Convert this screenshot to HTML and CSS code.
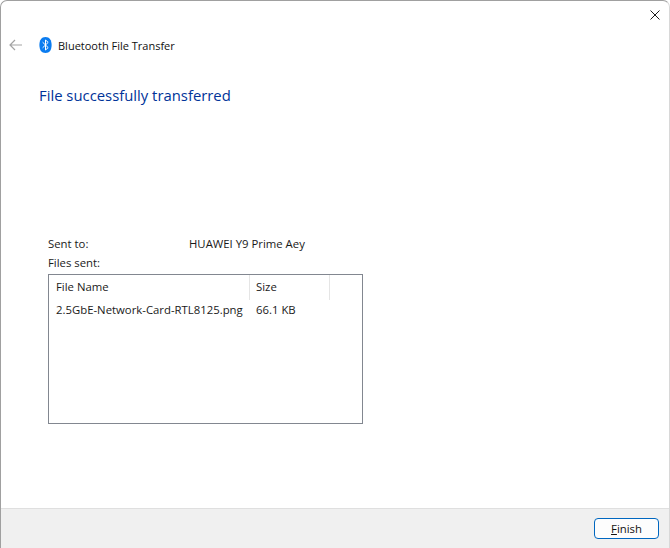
FILE: index.html
```html
<!DOCTYPE html>
<html lang="en">
<head>
<meta charset="utf-8">
<title>Bluetooth File Transfer</title>
<link rel="stylesheet" href="styles.css">
</head>
<body>
<div class="window">
  <div class="titlebar">
    <svg class="close" width="10" height="10" viewBox="0 0 10 10"><path d="M0.5 0.5L9.5 9.5M9.5 0.5L0.5 9.5" stroke="#1a1a1a" stroke-width="1" fill="none"/></svg>
  </div>
  <div class="nav">
    <svg class="back" width="13" height="12" viewBox="0 0 13 12"><path d="M6 1L1 6L6 11M1 6H13" stroke="#a3a3a3" stroke-width="1.2" fill="none"/></svg>
    <svg class="bt" width="13" height="16" viewBox="0 0 13 16"><path d="M6.5 0C10.6 0 12.6 3 12.6 8S10.6 16 6.5 16S0.4 13 0.4 8S2.4 0 6.5 0Z" fill="#0a7cf0"/><path d="M3.6 5.2L9.2 10.6L6.5 13V3L9.2 5.4L3.6 10.8" stroke="#fff" stroke-width="1" fill="none"/></svg>
    <span class="nav-title">Bluetooth File Transfer</span>
  </div>
  <h1 class="heading">File successfully transferred</h1>
  <div class="content">
    <div class="row sent"><span class="label">Sent to:</span><span>HUAWEI Y9 Prime Aey</span></div>
    <div class="row files">Files sent:</div>
    <div class="list">
      <div class="list-head">
        <div class="col name">File Name</div>
        <div class="col size">Size</div>
      </div>
      <div class="list-row">
        <div class="cell name">2.5GbE-Network-Card-RTL8125.png</div>
        <div class="cell size">66.1 KB</div>
      </div>
    </div>
  </div>
  <div class="footer">
    <button class="finish"><u>F</u>inish</button>
  </div>
</div>
</body>
</html>
```

FILE: styles.css
```css
* { box-sizing: border-box; }
html, body { margin: 0; padding: 0; height: 100%; background: #fff; overflow: hidden; }
body { font-family: "Open Sans", "Noto Sans", sans-serif; font-size: 11.35px; color: #1a1a1a; }
.window { width: 670px; height: 548px; display: flex; flex-direction: column; background: #fff; border: 1px solid #a0a0a0; border-right-color: #d8d8d8; border-bottom: none; border-radius: 7px 7px 0 0; overflow: hidden; }
.titlebar { height: 29px; display: flex; justify-content: flex-end; align-items: flex-start; padding: 9px 9px 0 0; flex: none; }
.close { display: block; }
.nav { height: 30px; display: flex; align-items: center; padding-left: 8px; flex: none; }
.back { margin-right: 17px; }
.bt { margin-right: 6px; }
.nav-title { font-size: 11px; color: #111; }
.heading { margin: 24px 0 0 38px; font-size: 14.85px; line-height: 22px; font-weight: 400; color: #003399; flex: none; }
.content { margin: 129px 0 0 47px; width: 315px; flex: none; }
.row { line-height: 18px; }
.sent { display: flex; }
.label { width: 141px; }
.files { margin-top: 1px; }
.list { margin-top: 2px; height: 150px; border: 1px solid #828790; }
.list-head { display: flex; height: 25px; }
.list-row { display: flex; height: 18px; align-items: center; }
.col, .cell { padding-left: 7px; white-space: nowrap; }
.name { width: 201px; }
.size { width: 80px; padding-left: 6px; }
.col { display: flex; align-items: center; height: 100%; padding-bottom: 2px; border-right: 1px solid #e5e5e5; }
.footer { margin-top: auto; height: 40px; flex: none; background: #f0f0f0; border-top: 1px solid #dfdfdf; display: flex; justify-content: flex-end; align-items: center; padding-right: 10px; }
.finish { width: 65px; height: 21px; padding: 0; font: inherit; color: #111; background: #fdfdfd; border: 1px solid #0067c0; border-radius: 4px; }
```
